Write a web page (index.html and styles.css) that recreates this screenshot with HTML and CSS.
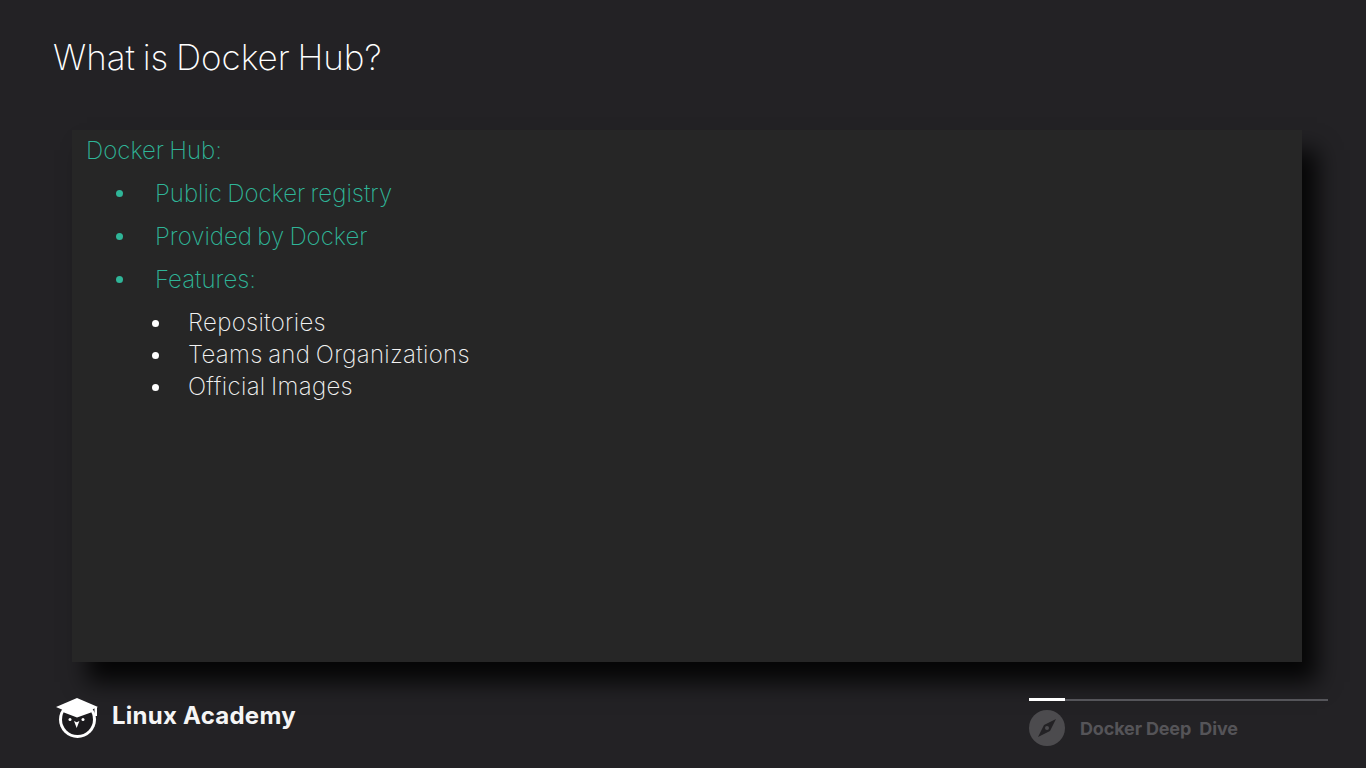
FILE: index.html
```html
<!DOCTYPE html>
<html lang="en">
<head>
<meta charset="utf-8">
<title>What is Docker Hub?</title>
<link rel="stylesheet" href="styles.css">
</head>
<body>
<main class="slide">
  <h1 class="title">What is Docker Hub?</h1>
  <section class="panel">
    <p class="lead">Docker Hub:</p>
    <ul class="points">
      <li>Public Docker registry</li>
      <li>Provided by Docker</li>
      <li>Features:</li>
    </ul>
    <ul class="subpoints">
      <li>Repositories</li>
      <li>Teams and Organizations</li>
      <li>Official Images</li>
    </ul>
  </section>
  <footer class="footer">
    <div class="brand">
      <svg class="owl" viewBox="0 0 44 42" aria-hidden="true">
        <circle class="owl-body" cx="22.500" cy="22.500" r="18.500"/>
        <circle class="owl-face" cx="22.500" cy="22.500" r="15.500"/>
        <path class="owl-body" d="M22 1 L43 10 L22 19 L1 10 Z"/>
        <path class="owl-body" d="M9 12 L22 17 L36 12 L36 15.500 L22 20.500 L9 15.500 Z"/>
        <rect class="owl-body" x="39.500" y="10" width="2.500" height="9"/>
        <circle class="owl-body" cx="15" cy="22.500" r="1.500"/>
        <circle class="owl-body" cx="28" cy="22.500" r="1.500"/>
        <path class="owl-body" d="M19 24 L21.700 25.200 L24.400 24 L21.700 31 Z"/>
      </svg>
      <span class="brand-name">Linux Academy</span>
    </div>
    <div class="course">
      <div class="progress"><span class="progress-fill"></span></div>
      <div class="course-info">
        <svg class="compass" viewBox="0 0 36 36" aria-hidden="true">
          <circle class="compass-disc" cx="18" cy="18" r="18"/>
          <path class="compass-needle" d="M27 9 L21 21 L9 27 L15 15 Z"/>
          <circle class="compass-disc" cx="18" cy="18" r="2"/>
        </svg>
        <span class="course-name">Docker Deep&nbsp; Dive</span>
      </div>
    </div>
  </footer>
</main>
</body>
</html>
```
FILE: styles.css
```css
* { box-sizing: border-box; }
html, body { margin: 0; padding: 0; }
body {
  width: 1366px;
  height: 768px;
  overflow: hidden;
  background: #232225;
  font-family: Inter, "Liberation Sans", sans-serif;
}
.slide {
  width: 1366px;
  height: 768px;
  display: flex;
  flex-direction: column;
}
.title {
  margin: 0;
  height: 130px;
  padding: 36px 0 0 53px;
  font-size: 35px;
  line-height: 42px;
  font-weight: 200;
  letter-spacing: -0.02px;
  word-spacing: -2px;
  color: #fff;
}
.panel {
  width: 1230px;
  height: 532px;
  margin-left: 72px;
  padding: 5px 0 0 14px;
  background: #262626;
  box-shadow: 15px 20px 22px rgba(0, 0, 0, 0.85);
}
.lead, .points { color: #2fb598; }
.lead {
  margin: 0;
  font-size: 24px;
  line-height: 32px;
  font-weight: 250;
  letter-spacing: 0;
  word-spacing: -1.500px;
}
.points, .subpoints { list-style: none; margin: 0; padding: 0; font-weight: 250; font-size: 24px; letter-spacing: 0; word-spacing: -1.500px; }
.points { padding: 11px 0 0 69px; display: flex; flex-direction: column; gap: 11px; }
.points li, .subpoints li { position: relative; line-height: 32px; }
.points li::before, .subpoints li::before {
  content: "";
  position: absolute;
  top: 12px;
  border-radius: 50%;
  width: 7px;
  height: 7px;
}
.points li::before { left: -39px; background: #2fb598; }
.subpoints { padding: 11px 0 0 102px; color: #f2f2f2; font-weight: 200; letter-spacing: 0.3px; }
.subpoints li::before { left: -36px; top: 13px; background: #fff; }
.footer {
  flex: 1;
  display: flex;
  justify-content: space-between;
  padding: 35px 38px 0 55px;
}
.brand { display: flex; align-items: flex-start; gap: 13px; }
.owl { width: 44px; height: 42px; }
.owl-body { fill: #fff; }
.owl-face { fill: #1c1b1e; }
.brand-name {
  font-size: 24px;
  line-height: 28px;
  font-weight: 700;
  letter-spacing: 0.25px;
  color: #f5f5f5;
  padding-top: 5px;
}
.course { width: 299px; }
.progress {
  height: 2px;
  margin-top: 2px;
  background: #55555a;
}
.progress-fill { display: block; width: 36px; height: 3px; background: #fff; transform: translateY(-1px); }
.course-info { display: flex; align-items: center; gap: 15px; margin-top: 9px; }
.compass { width: 36px; height: 36px; }
.compass-disc { fill: #4c4b4e; }
.compass-needle { fill: #232225; }
.course-name {
  font-size: 18px;
  font-weight: 700;
  letter-spacing: -0.15px;
  color: #555458;
}
```
